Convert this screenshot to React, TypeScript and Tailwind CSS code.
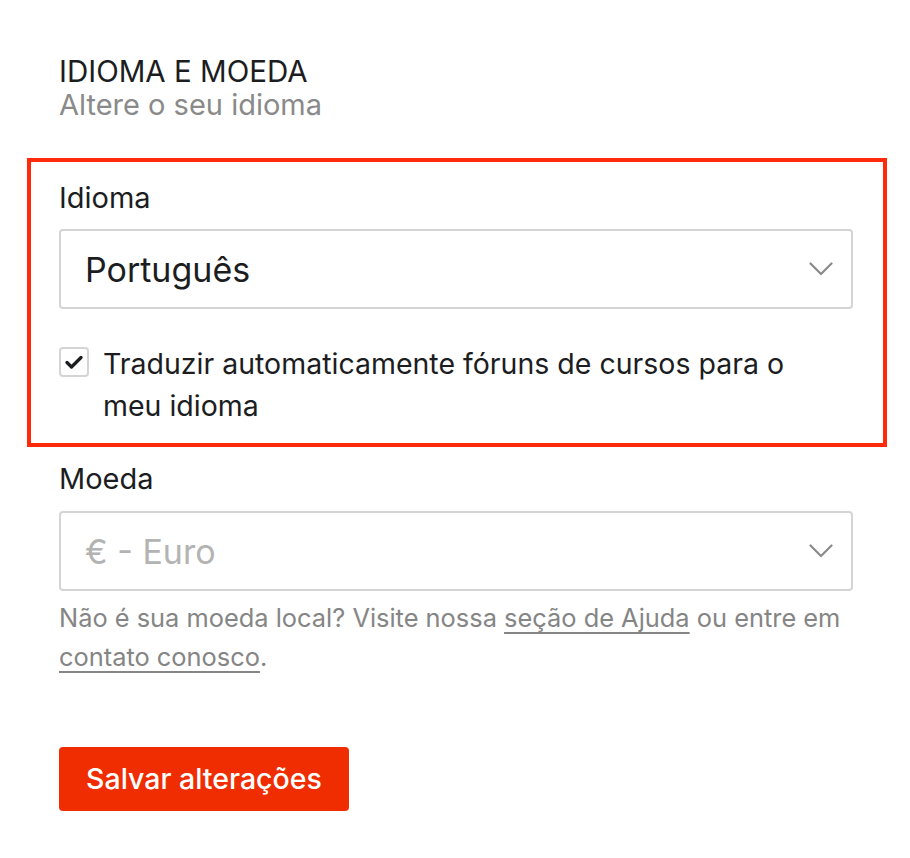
import React from 'react';

const Chevron = () => (
  <svg width="24" height="14" viewBox="0 0 24 14" fill="none" className="shrink-0">
    <path d="M1.5 1.5l10.5 10.5L22.5 1.5" stroke="#8a8a8a" strokeWidth="2.2" strokeLinecap="round" strokeLinejoin="round" />
  </svg>
);

export default function App() {
  return (
    <div className="min-h-[858px] w-[910px] bg-white pl-[27px] pr-[23px] pt-[55px] text-[#1c1d1f]" style={{ fontFamily: 'Inter, "Noto Sans", sans-serif' }}>
      {/* header */}
      <div className="pl-[32px]">
        <h2 className="text-[29.5px] leading-[33px] font-normal">IDIOMA E MOEDA</h2>
        <p className="text-[29px] leading-[33px] text-[#8a8a8a]">Altere o seu idioma</p>
      </div>

      {/* language, highlighted */}
      <div className="mt-[37px] border-4 border-[#ff2a0a] pl-[28px] pr-[30px] pt-[20px] pb-[16px]">
        <label className="block text-[29px] leading-[32px]">Idioma</label>
        <div className="mt-[15px] flex h-[80px] items-center justify-between rounded-[4px] border-2 border-[#d4d4d4] pl-[24px] pr-[18px]">
          <span className="text-[34px]">Português</span>
          <Chevron />
        </div>
        <div className="mt-[34px] flex items-start gap-[14px]">
          <div className="mt-[4px] flex h-[30px] w-[30px] shrink-0 items-center justify-center rounded-[4px] border-2 border-[#d4d4d4]">
            <svg width="18" height="14" viewBox="0 0 18 14" fill="none">
              <path d="M2 7.5l4.5 4.5L16 2.5" stroke="#1c1d1f" strokeWidth="3.2" strokeLinecap="round" strokeLinejoin="round" />
            </svg>
          </div>
          <p className="max-w-[715px] text-[28.5px] leading-[42px]">Traduzir automaticamente fóruns de cursos para o meu idioma</p>
        </div>
      </div>

      {/* currency */}
      <div className="pl-[32px] pr-[34px] pt-[16px]">
        <label className="block text-[29px] leading-[32px]">Moeda</label>
        <div className="mt-[16px] flex h-[80px] items-center justify-between rounded-[4px] border-2 border-[#d4d4d4] pl-[24px] pr-[18px]">
          <span className="text-[34px] text-[#b3b3b3]">€ - Euro</span>
          <Chevron />
        </div>
        <p className="mt-[7px] text-[25.4px] leading-[39px] text-[#858585]">
          Não é sua moeda local? Visite nossa{' '}
          <a className="underline decoration-2 underline-offset-[5px]">seção de Ajuda</a> ou entre em{' '}
          <a className="underline decoration-2 underline-offset-[5px]">contato conosco</a>.
        </p>

        <button className="mt-[71px] h-[64px] w-[290px] rounded-[4px] bg-[#f02d00] text-[28.5px] font-medium text-white">
          Salvar alterações
        </button>
      </div>
    </div>
  );
}
